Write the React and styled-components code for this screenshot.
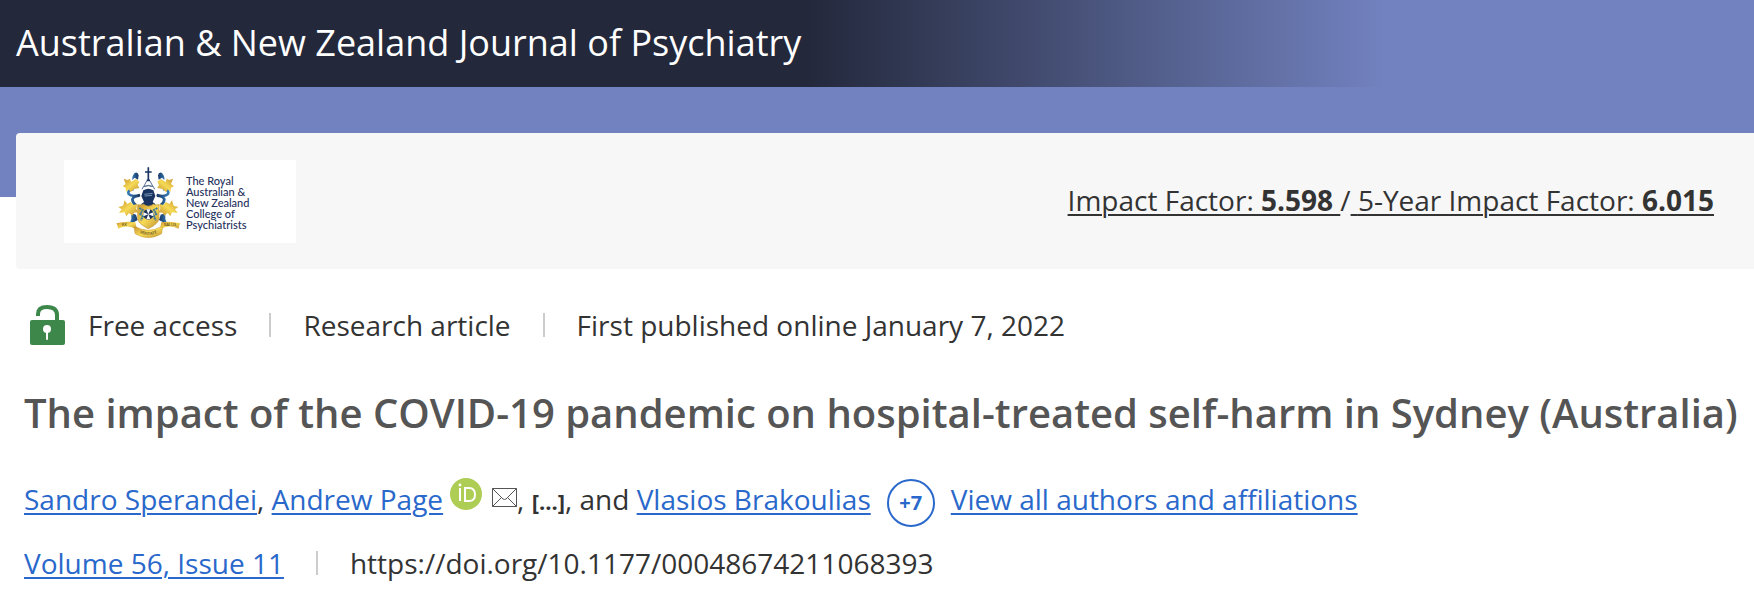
import React from 'react';
import styled, { createGlobalStyle } from 'styled-components';

const GlobalStyle = createGlobalStyle`
	* {
		box-sizing: border-box;
	}
	body {
		margin: 0;
		background-color: #fff;
		color: #333;
		font-family: 'Open Sans', 'Noto Sans', sans-serif;
		font-size: 28px;
		line-height: 40px;
	}
`;

const Banner = styled.header`
	background-color: #7282c0;
	padding-bottom: 110px;
`;

const JournalBar = styled.div`
	background-image: linear-gradient(90deg, #23283b 0%, #23283b 46%, #7282c0 79%);
	padding: 19px 16px 20px;
`;

const JournalName = styled.p`
	margin: 0;
	color: #fff;
	font-size: 36px;
	line-height: 48px;
`;

const SocietyCard = styled.section`
	display: flex;
	align-items: center;
	justify-content: space-between;
	background-color: #f7f7f7;
	border-radius: 4px 0 0 4px;
	margin: -64px 0 0 16px;
	padding: 27px 40px 26px 48px;
`;

const SocietyLink = styled.a`
	display: flex;
	align-items: center;
	gap: 5px;
	width: 232px;
	height: 83px;
	padding: 2px 0 0 52px;
	background-color: #fff;
	color: #25305c;
	font-family: Lato, 'Open Sans', sans-serif;
	font-size: 11px;
	font-weight: 500;
	line-height: 11px;
	text-decoration: none;
`;

const Impact = styled.p`
	margin: 0;
	padding-bottom: 4px;
`;

const DarkLink = styled.a`
	color: #333;
	text-decoration: underline;
	text-decoration-thickness: 2px;
	text-underline-offset: 3px;
	white-space: pre-wrap;
`;

const BlueLink = styled.a`
	color: #2a69cb;
	text-decoration: underline;
	text-decoration-thickness: 2px;
	text-underline-offset: 3px;
`;

const Article = styled.main`
	padding: 36px 16px 8px 24px;
`;

const MetaRow = styled.div`
	display: flex;
	align-items: center;
	color: #333;
`;

const LockIcon = styled.svg`
	width: 35px;
	height: 40px;
	margin: 0 23px 0 6px;
`;

const Divider = styled.span`
	width: 2px;
	height: 24px;
	margin: 0 32px;
	background-color: #ccc;
`;

const Title = styled.h1`
	margin: 40px 0 34px;
	color: #555;
	font-size: 40px;
	font-weight: 600;
	line-height: 56px;
`;

const Authors = styled.div`
	margin-bottom: 16px;
	line-height: 48px;
`;

const IconLink = styled.a`
	display: inline-block;
	line-height: 0;
	margin-left: ${(props) => props.$gap}px;
`;

const OrcidIcon = styled.svg`
	width: 32px;
	height: 32px;
`;

const MailIcon = styled.svg`
	width: 25px;
	height: 19px;
	margin-bottom: 3px;
`;

const Ellipsis = styled.button`
	border: 0;
	padding: 0;
	background: none;
	color: #333;
	font: 700 22px 'Open Sans', sans-serif;
`;

const MoreButton = styled.button`
	width: 48px;
	height: 48px;
	margin: 0 16px;
	padding: 0;
	border: 2px solid #2a69cb;
	border-radius: 50%;
	background: none;
	color: #2a69cb;
	font: 700 20px 'Open Sans', sans-serif;
	vertical-align: middle;
`;

function Crest() {
	return (
		<svg width="65" height="71" viewBox="20 18 195 213" aria-hidden="true">
			<defs>
				<linearGradient id="gold" x1="0" x2="1" y1="0" y2="1">
					<stop offset="0" stopColor="#c9952f" />
					<stop offset="0.5" stopColor="#f6da55" />
					<stop offset="1" stopColor="#c2902f" />
				</linearGradient>
				<linearGradient id="navy" x1="0" x2="1">
					<stop offset="0" stopColor="#3479b4" />
					<stop offset="1" stopColor="#173461" />
				</linearGradient>
				<path id="scroll" d="M82 211q35 22 70 0" />
			</defs>
			<g id="mantle">
				<path d="M76 36q9-5 12 7l-2 13-10-6-7 7q-2-11 7-21z" fill="url(#navy)" />
				<path
					d="M73 84Q53 87 58 99q8 10 34 3M91 104q-17 0-22 11 1 12 12 18"
					fill="none"
					stroke="url(#navy)"
					strokeWidth="8"
				/>
				<path d="M66 156l14 5 5 16-12 7 2 9-14-6 5-13z" fill="url(#navy)" />
				<path
					d="M43 53l11 4 8-4 3 10 15-9 10 8-5 10 5 9-15 3-12 10-4-9-9 7-1-12-9-4 9-7z"
					fill="url(#gold)"
				/>
				<path
					d="M46 118l8 11 10-6 8 9 12-3-3 14 5 11-12 1-5 9-10-8-8 10-5-12-17 2 8-11-10-7 14-4z"
					fill="url(#gold)"
				/>
			</g>
			<use href="#mantle" transform="matrix(-1 0 0 1 234 0)" />
			<path d="M117 19v41M107 33h20M112 58h10" stroke="#193461" strokeWidth="5" />
			<path d="M112 60l-9 17q14-8 28 0l-9-17M98 85l4-8q15-6 30 0l4 8" fill="none" stroke="#5b7191" strokeWidth="3" />
			<path d="M102 88q15-10 30 0l6 17-8 18 9 7-12 10H107l-12-10 9-7-8-18z" fill="#193461" />
			<path d="M105 100l25-3M106 105l22-2" stroke="#7894b7" strokeWidth="3" />
			<path
				d="M85 131q15 2 17-2 15 13 31 0 3 4 16 2v40q0 17-32 32-32-15-32-32z"
				fill="url(#gold)"
				stroke="#c29a37"
				strokeWidth="2"
			/>
			<path d="M90 141l10 6-7 12 8 8-7 11M144 141l-10 6 7 12-8 8 7 11" fill="none" stroke="#39799e" strokeWidth="6" strokeDasharray="6 2" />
			<circle cx="117" cy="160" r="16" fill="#1e3559" />
			<path d="M117 160l-6-15h12zM117 160l-6 15h12zM117 160l-15-6v12zM117 160l15-6v12z" fill="#fff" />
			<path d="M21 187q29-8 57-3l3 13 2 9-17-8q-20-4-40 5l-1-8z" fill="url(#gold)" />
			<path d="M213 187q-29-8-57-3l-3 13-2 9 17-8q20-4 40 5l1-8z" fill="url(#gold)" />
			<path d="M74 199l5-2q38 21 76 0l5 2-3 19q-40 24-80 0z" fill="url(#gold)" stroke="#b58b32" />
			<g fill="#584920" fontSize="12" fontWeight="600" fontFamily="Open Sans">
				<text x="38" y="195">EX</text>
				<text>
					<textPath href="#scroll" startOffset="50%" textAnchor="middle">
						VERITATE
					</textPath>
				</text>
				<text x="164" y="195">SALUS</text>
			</g>
		</svg>
	);
}

function App() {
	return (
		<>
			<GlobalStyle />
			<Banner>
				<JournalBar>
					<JournalName>Australian &amp; New Zealand Journal of Psychiatry</JournalName>
				</JournalBar>
			</Banner>
			<SocietyCard>
				<SocietyLink href="#society">
					<Crest />
					<span>
						The Royal
						<br />
						Australian &amp;
						<br />
						New Zealand
						<br />
						College of
						<br />
						Psychiatrists
					</span>
				</SocietyLink>
				<Impact>
					<DarkLink href="#impact">
						Impact Factor: <b>5.598 </b>
					</DarkLink>
					/
					<DarkLink href="#impact-5">
						{' '}
						5-Year Impact Factor: <b>6.015</b>
					</DarkLink>
				</Impact>
			</SocietyCard>
			<Article>
				<MetaRow>
					<LockIcon viewBox="0 0 35 40" aria-hidden="true">
						<path d="M8 11V9q0-7 9-7 10 0 10 8v7" fill="none" stroke="#3c8749" strokeWidth="4" />
						<rect y="15" width="35" height="25" rx="2" fill="#3c8749" />
						<circle cx="17" cy="24" r="4" fill="#fff" />
						<path d="M17 25v9" stroke="#fff" strokeWidth="2" strokeLinecap="round" />
					</LockIcon>
					<span>Free access</span>
					<Divider />
					<span>Research article</span>
					<Divider />
					<span>First published online January 7, 2022</span>
				</MetaRow>
				<Title>The impact of the COVID-19 pandemic on hospital-treated self-harm in Sydney (Australia)</Title>
				<Authors>
					<BlueLink href="#sperandei">Sandro Sperandei</BlueLink>, <BlueLink href="#page">Andrew Page</BlueLink>
					<IconLink href="#orcid" aria-label="ORCID" $gap={7}>
						<OrcidIcon viewBox="0 0 32 32">
							<circle cx="16" cy="16" r="16" fill="#aecd54" />
							<path d="M10 10v13M15 10h4q6 0 6 6.500t-6 6.500h-4z" fill="none" stroke="#fff" strokeWidth="2" />
							<circle cx="10" cy="7" r="1.4" fill="#fff" />
						</OrcidIcon>
					</IconLink>
					<IconLink href="#mail" aria-label="Email" $gap={10}>
						<MailIcon viewBox="0 0 25 19">
							<path d="M.5.5h24v18H.5zM.5.5L11 11q1.500 1 3 0L24.500.5M.5 18.500L9.500 9.500M24.500 18.500L15.500 9.500" fill="none" stroke="#555" />
						</MailIcon>
					</IconLink>
					, <Ellipsis type="button">[...]</Ellipsis>, and <BlueLink href="#brakoulias">Vlasios Brakoulias</BlueLink>
					<MoreButton type="button">+7</MoreButton>
					<BlueLink href="#authors">View all authors and affiliations</BlueLink>
				</Authors>
				<MetaRow>
					<BlueLink href="#issue">Volume 56, Issue 11</BlueLink>
					<Divider />
					<span>https://doi.org/10.1177/00048674211068393</span>
				</MetaRow>
			</Article>
		</>
	);
}
export default App;
